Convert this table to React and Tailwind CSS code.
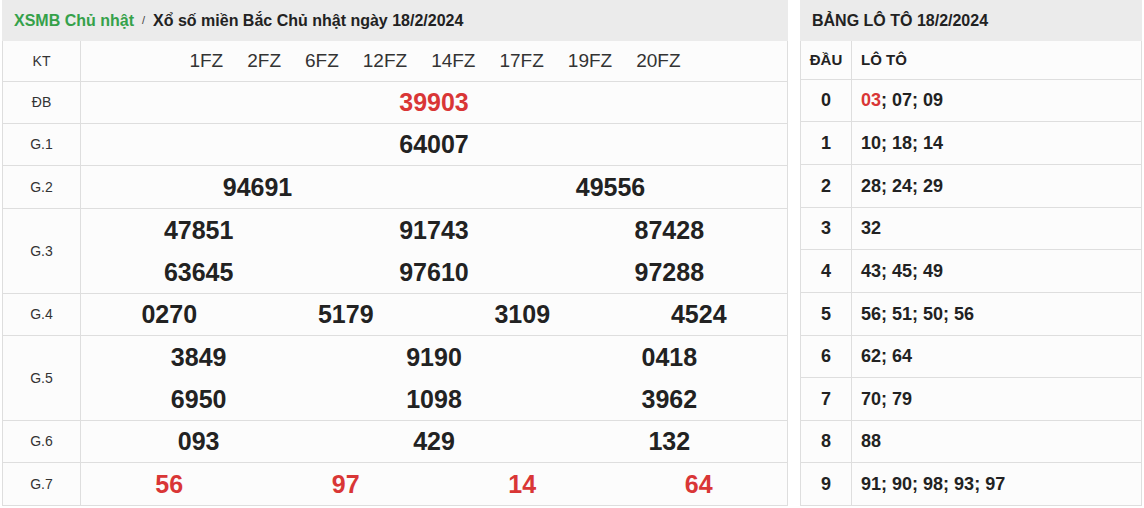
import React from 'react';

const font = { fontFamily: '"Liberation Sans", Arial, sans-serif' };

const prizes = [
  { label: 'ĐB', h: 'h-[42px]', cols: 1, lines: [['39903']], red: true },
  { label: 'G.1', h: 'h-[42px]', cols: 1, lines: [['64007']] },
  { label: 'G.2', h: 'h-[43px]', cols: 2, lines: [['94691', '49556']] },
  { label: 'G.3', h: 'h-[85px]', cols: 3, lines: [['47851', '91743', '87428'], ['63645', '97610', '97288']] },
  { label: 'G.4', h: 'h-[42px]', cols: 4, lines: [['0270', '5179', '3109', '4524']] },
  { label: 'G.5', h: 'h-[85px]', cols: 3, lines: [['3849', '9190', '0418'], ['6950', '1098', '3962']] },
  { label: 'G.6', h: 'h-[42px]', cols: 3, lines: [['093', '429', '132']] },
  { label: 'G.7', h: 'h-[43px]', cols: 4, lines: [['56', '97', '14', '64']], red: true },
];

const gridCols = {
  1: 'grid-cols-1',
  2: 'grid-cols-2',
  3: 'grid-cols-3',
  4: 'grid-cols-4',
};

const loto = [
  { d: '0', h: 'h-[42px]', v: [['03', true], ['07'], ['09']] },
  { d: '1', h: 'h-[43px]', v: [['10'], ['18'], ['14']] },
  { d: '2', h: 'h-[43px]', v: [['28'], ['24'], ['29']] },
  { d: '3', h: 'h-[42px]', v: [['32']] },
  { d: '4', h: 'h-[43px]', v: [['43'], ['45'], ['49']] },
  { d: '5', h: 'h-[43px]', v: [['56'], ['51'], ['50'], ['56']] },
  { d: '6', h: 'h-[42px]', v: [['62'], ['64']] },
  { d: '7', h: 'h-[43px]', v: [['70'], ['79']] },
  { d: '8', h: 'h-[42px]', v: [['88']] },
  { d: '9', h: 'h-[43px]', v: [['91'], ['90'], ['98'], ['93'], ['97']] },
];

const codes = ['1FZ', '2FZ', '6FZ', '12FZ', '14FZ', '17FZ', '19FZ', '20FZ'];

export default function App() {
  return (
    <div className="min-h-screen bg-white pl-[2px] flex gap-[12px]" style={font}>
      {/* Results table */}
      <div className="w-[786px] shrink-0">
        <div className="h-[41px] bg-[#ebebeb] flex items-center pl-[12px] text-[16px] font-bold">
          <span className="text-[#35a14a]">XSMB Chủ nhật</span>
          <span className="text-[#444] text-[11px] mx-[8px] font-normal">/</span>
          <span className="text-[#222]">Xổ số miền Bắc Chủ nhật ngày 18/2/2024</span>
        </div>
        <div className="border-l border-r border-[#dedede] bg-[#fcfcfc]">
          <div className="flex h-[41px] border-b border-[#dedede]">
            <div className="w-[78px] shrink-0 border-r border-[#dedede] flex items-center justify-center text-[14px] text-[#333]">
              KT
            </div>
            <div className="flex-1 flex items-center justify-center gap-[24px] text-[19px] text-[#333] pl-[2px]">
              {codes.map((c) => (
                <span key={c}>{c}</span>
              ))}
            </div>
          </div>
          {prizes.map((p) => (
            <div key={p.label} className={`flex ${p.h} border-b border-[#dedede]`}>
              <div className="w-[78px] shrink-0 border-r border-[#dedede] flex items-center justify-center text-[14px] text-[#333]">
                {p.label}
              </div>
              <div className="flex-1 flex flex-col justify-center">
                {p.lines.map((line, i) => (
                  <div key={i} className={`grid ${gridCols[p.cols]} h-[42px] items-center`}>
                    {line.map((n, j) => (
                      <span
                        key={j}
                        className={`text-center text-[25px] font-bold leading-none ${p.red ? 'text-[#d93636]' : 'text-[#222]'}`}
                      >
                        {n}
                      </span>
                    ))}
                  </div>
                ))}
              </div>
            </div>
          ))}
        </div>
      </div>

      {/* Loto table */}
      <div className="w-[342px] shrink-0">
        <div className="h-[41px] bg-[#ebebeb] flex items-center pl-[12px] text-[16px] font-bold text-[#222]">
          BẢNG LÔ TÔ 18/2/2024
        </div>
        <div className="border-l border-r border-[#dedede] bg-[#fcfcfc]">
          <div className="flex h-[39px] border-b border-[#dedede] text-[15px] font-bold text-[#222]">
            <div className="w-[51px] shrink-0 border-r border-[#dedede] flex items-center justify-center">ĐẦU</div>
            <div className="flex-1 flex items-center pl-[9px]">LÔ TÔ</div>
          </div>
          {loto.map((r) => (
            <div key={r.d} className={`flex ${r.h} border-b border-[#dedede] text-[18px] font-bold text-[#222]`}>
              <div className="w-[51px] shrink-0 border-r border-[#dedede] flex items-center justify-center">{r.d}</div>
              <div className="flex-1 flex items-center pl-[9px]">
                {r.v.map(([n, red], i) => (
                  <React.Fragment key={i}>
                    <span className={red ? 'text-[#d93636]' : ''}>{n}</span>
                    {i < r.v.length - 1 && <span className="whitespace-pre">; </span>}
                  </React.Fragment>
                ))}
              </div>
            </div>
          ))}
        </div>
      </div>
    </div>
  );
}
